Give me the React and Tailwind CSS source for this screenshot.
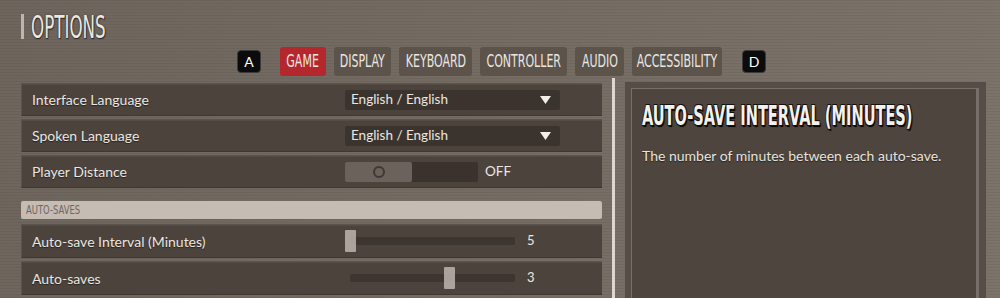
import React from "react";

const cond = "font-['DejaVu_Sans_Condensed','DejaVu_Sans',sans-serif]";

function Tab({ label, w, active }) {
  return (
    <div
      className={`h-[29px] ${w} rounded-[3px] flex items-center justify-center ${
        active ? "bg-[#b3272d]" : "bg-[#5c534b]"
      }`}
    >
      <span className={`${cond} inline-block text-[17px] leading-none text-[#ebe6e0] scale-x-[0.72] whitespace-nowrap`}>
        {label}
      </span>
    </div>
  );
}

function Key({ k }) {
  return (
    <div className="w-[24px] h-[23px] rounded-[4px] bg-[#0b0b0b] border border-[#3a3a3a] flex items-center justify-center text-white text-[14px] font-['Lato',sans-serif]">
      {k}
    </div>
  );
}

function Row({ label, h = "h-[33px]", children }) {
  return (
    <div className={`${h} flex items-center bg-[#4b433c] border-t border-l border-[#5c544c] border-b border-b-[#3f3832] shadow-[inset_0_1px_0_#544c45]`}>
      <div className="w-[323px] pl-[10px] text-[14px] text-[#ebe7e2] [text-shadow:0_1px_1px_rgba(0,0,0,0.5)]">{label}</div>
      {children}
    </div>
  );
}

function Dropdown() {
  return (
    <div className="w-[215px] h-[20px] bg-[#3b342e] rounded-[2px] flex items-center justify-between pl-[6px] pr-[9px]">
      <span className="text-[13.5px] text-[#ebe7e2]">English / English</span>
      <svg width="11" height="8" viewBox="0 0 11 8"><path d="M0 0 H11 L5.5 8 Z" fill="#f2efea" /></svg>
    </div>
  );
}

function Slider({ pos, value }) {
  return (
    <div className="flex items-center">
      <div className="relative w-[170px] h-[22px] flex items-center">
        <div className="ml-[5px] w-[165px] h-[8px] rounded-[2px] bg-[#3d352f]" />
        <div className="absolute top-0 w-[11px] h-[22px] rounded-[1px] bg-[#b6aea6] opacity-90" style={{ left: pos }} />
      </div>
      <span className="ml-[12px] text-[13px] text-[#ebe7e2]">{value}</span>
    </div>
  );
}

export default function App() {
  return (
    <div className="w-[1000px] h-[298px] overflow-hidden font-['Lato',sans-serif] bg-[#736a61] bg-[image:repeating-linear-gradient(0deg,rgba(0,0,0,0.05)_0px,rgba(0,0,0,0.05)_1px,transparent_1px,transparent_3px),linear-gradient(100deg,#6e655d_0%,#756c63_50%,#7c736a_100%)]">
      {/* title */}
      <div className="flex items-center pl-[21px] pt-[13px] h-[40px]">
        <div className="w-[3px] h-[25px] bg-[#bdb6af]" />
        <span className={`${cond} ml-[7px] inline-block origin-left scale-x-[0.62] scale-y-[1.05] text-[30px] leading-none text-[#ece7e1] [text-shadow:0_0_2px_#2a2420,1px_1px_1px_#2a2420]`}>
          OPTIONS
        </span>
      </div>
      {/* tabs */}
      <div className="flex items-center h-[29px] mt-[7px] pl-[237px]">
        <Key k="A" />
        <div className="ml-[19px] flex gap-[8px]">
          <Tab label="GAME" w="w-[46px]" active />
          <Tab label="DISPLAY" w="w-[57px]" />
          <Tab label="KEYBOARD" w="w-[73px]" />
          <Tab label="CONTROLLER" w="w-[87px]" />
          <Tab label="AUDIO" w="w-[49px]" />
          <Tab label="ACCESSIBILITY" w="w-[90px]" />
        </div>
        <div className="ml-[20px]"><Key k="D" /></div>
      </div>
      {/* main */}
      <div className="flex mt-[6px] pl-[21px]">
        <div className="w-[581px] flex flex-col pt-[1px]">
          <Row label="Interface Language"><Dropdown /></Row>
          <div className="h-[3px]" />
          <Row label="Spoken Language"><Dropdown /></Row>
          <div className="h-[3px]" />
          <Row label="Player Distance">
            <div className="w-[133px] h-[20px] bg-[#3a322c] rounded-[2px] flex">
              <div className="w-[67px] h-full bg-[#6b635b] rounded-[2px] flex items-center justify-center">
                <div className="w-[12px] h-[12px] rounded-full border-2 border-[#3f3731]" />
              </div>
            </div>
            <span className="ml-[7px] text-[13.5px] text-[#ebe7e2]">OFF</span>
          </Row>
          <div className="mt-[13px] h-[18px] bg-[#c5bcb4] rounded-[2px] flex items-center pl-[5px]">
            <span className={`${cond} inline-block origin-left scale-x-[0.78] text-[12px] leading-none text-[#6f675f]`}>AUTO-SAVES</span>
          </div>
          <div className="h-[5px]" />
          <Row label="Auto-save Interval (Minutes)" h="h-[34px]"><Slider pos={0} value="5" /></Row>
          <div className="h-[3px]" />
          <Row label="Auto-saves" h="h-[34px]"><Slider pos={99} value="3" /></Row>
        </div>
        {/* scrollbar */}
        <div className="ml-[10px] w-[3px] h-[230px] -mt-[4px] bg-[#ddd7d1]" />
        {/* right panel */}
        <div className="ml-[10px] w-[361px] h-[230px] bg-[#554d46] pt-[6px] pl-[6px] pr-[7px]">
          <div className="h-full border-t border-l border-r-[3px] border-[#77706a] bg-[#4d453e] pl-[10px] pt-[13px]">
            <div className={`${cond} font-bold inline-block origin-left scale-x-[0.6] text-[27px] leading-none whitespace-nowrap text-[#f4f1ed] [text-shadow:-1px_-1px_0_#111,1px_-1px_0_#111,-1px_1px_0_#111,1px_1px_0_#111,2px_2px_1px_#000]`}>
              AUTO-SAVE INTERVAL (MINUTES)
            </div>
            <p className="mt-[14px] text-[14px] text-[#e8e4df] [text-shadow:0_1px_1px_rgba(0,0,0,0.5)]">
              The number of minutes between each auto-save.
            </p>
          </div>
        </div>
      </div>
    </div>
  );
}
